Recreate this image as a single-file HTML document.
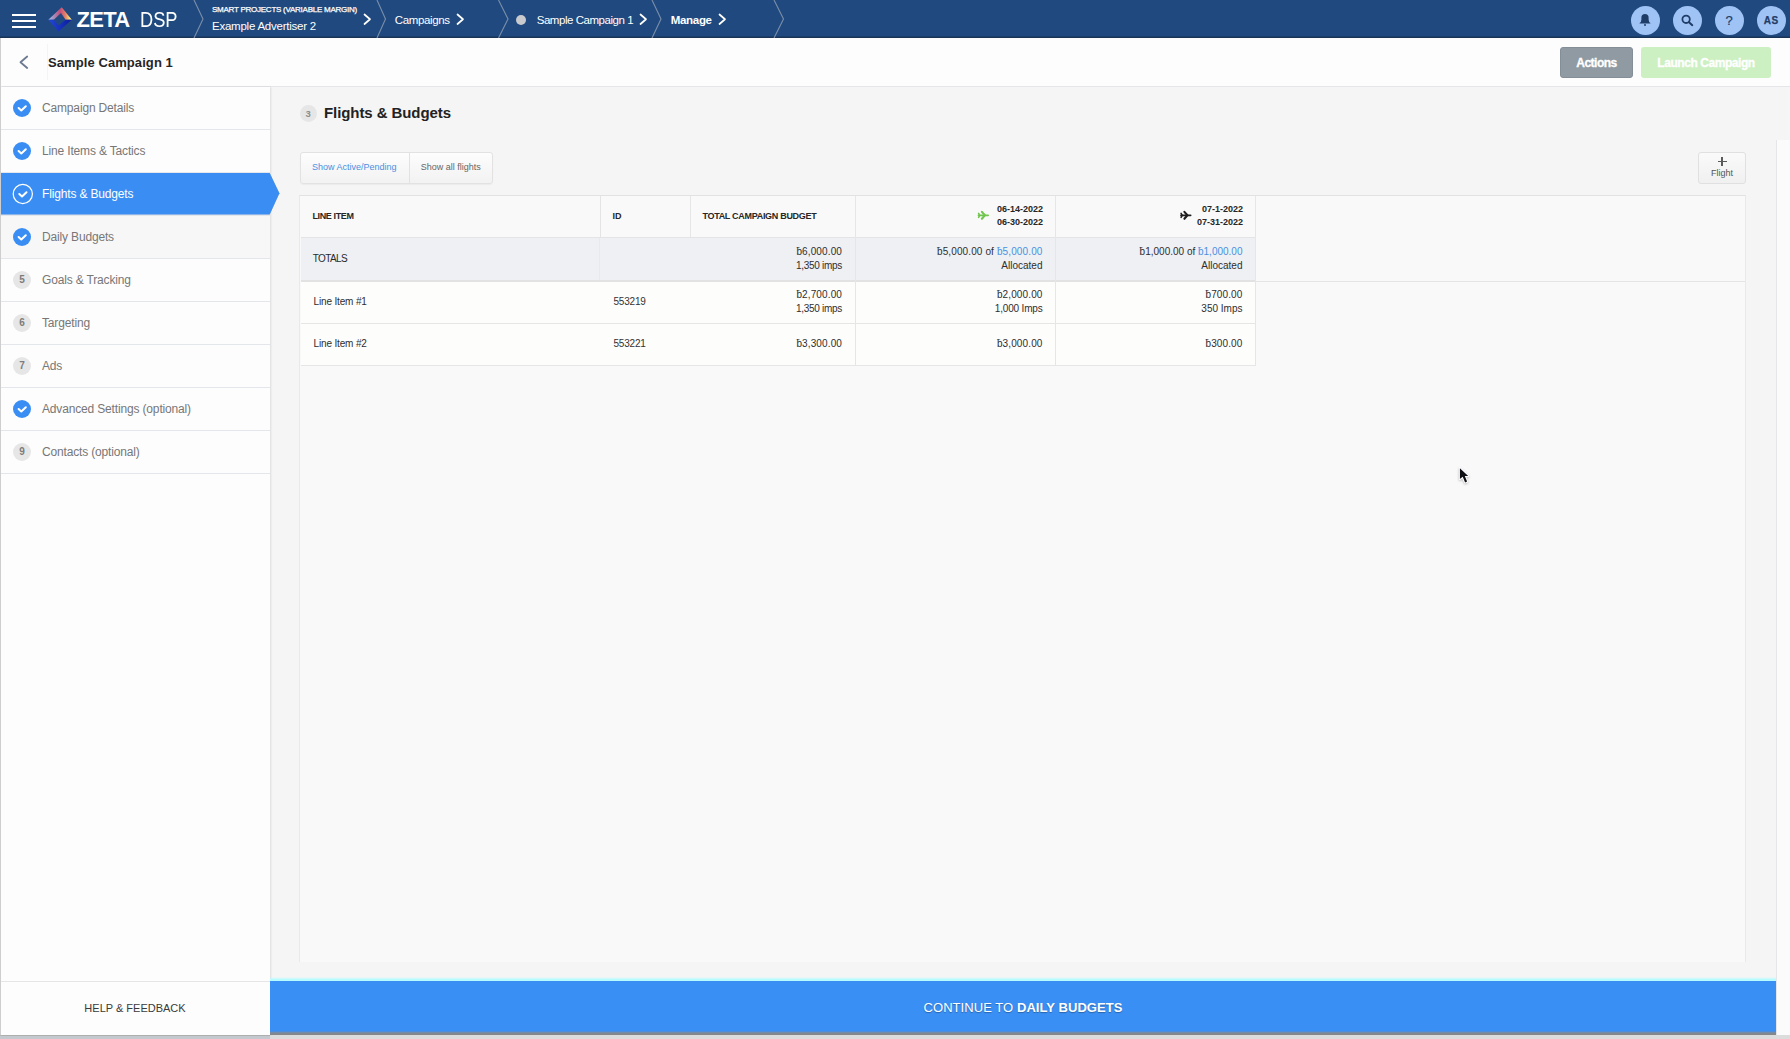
<!DOCTYPE html>
<html><head><meta charset="utf-8"><style>
*{box-sizing:border-box;margin:0;padding:0}
html,body{width:1790px;height:1039px;overflow:hidden;background:#dadada;font-family:"Liberation Sans",sans-serif;color:#333;position:relative}
.t{position:absolute;line-height:0;white-space:nowrap}
.b{position:absolute}
svg{position:absolute;overflow:visible}
</style></head><body>
<div class="b" style="left:0px;top:1035px;width:1790px;height:4px;background:#dcdcdc"></div>
<div class="b" style="left:0px;top:1035px;width:270px;height:1px;background:#b4b4b4"></div>
<div class="b" style="left:0px;top:1036px;width:270px;height:3px;background:#c4c9cf"></div>
<div class="b" style="left:1776px;top:140px;width:14px;height:895px;background:#fbfbfb;border-left:1px solid #e6e6e6"></div>
<div class="b" style="left:270px;top:87px;width:1520px;height:53px;background:#f5f5f5"></div>
<div class="b" style="left:270px;top:140px;width:1506px;height:841px;background:#f5f5f5"></div>
<div class="b" style="left:0px;top:0px;width:1790px;height:38px;background:#204a7f"></div>
<div class="b" style="left:0px;top:36px;width:1790px;height:1px;background:rgba(20,40,70,0.35)"></div>
<div class="b" style="left:0px;top:37px;width:1790px;height:1px;background:#1a3458"></div>
<div class="b" style="left:12px;top:14px;width:24px;height:2px;background:#fff"></div>
<div class="b" style="left:12px;top:20px;width:24px;height:2px;background:#fff"></div>
<div class="b" style="left:12px;top:26px;width:24px;height:2px;background:#fff"></div>
<svg style="left:0;top:0" width="100" height="38">
<defs>
<linearGradient id="gt" x1="48" y1="0" x2="72" y2="0" gradientUnits="userSpaceOnUse">
<stop offset="0" stop-color="#9cc4f2"/><stop offset="0.25" stop-color="#a98ab8"/><stop offset="0.5" stop-color="#c84c7a"/><stop offset="0.72" stop-color="#e0806a"/><stop offset="0.9" stop-color="#f6dc72"/><stop offset="1" stop-color="#fffbd0"/></linearGradient>
<linearGradient id="gb" x1="48" y1="0" x2="72" y2="0" gradientUnits="userSpaceOnUse">
<stop offset="0" stop-color="#2447d8"/><stop offset="1" stop-color="#0a1c9c"/></linearGradient>
</defs>
<path d="M48.3 19.7 L61.7 7.2 L71.8 19.7 L65.6 19.7 L61 13.1 L53.8 19.7 Z" fill="url(#gt)"/>
<path d="M48.3 19.7 L53.8 19.7 L58.7 25.6 L65.6 19.7 L71.8 19.7 L58.4 31.5 Z" fill="url(#gb)"/>
</svg>
<div class="t" style="left:76.5px;top:20.18px;font-size:22px;color:#fff;font-weight:bold;letter-spacing:-0.7px;">ZETA</div>
<div class="t" style="left:140px;top:20.2px;font-size:22px;color:#fff;transform:scaleX(0.83);transform-origin:0 0">DSP</div>
<svg style="left:0;top:0" width="800" height="38"><polyline points="194,0 203,19 194,38" fill="none" stroke="#7a8ea9" stroke-width="1.1"/><polyline points="377,0 385.5,19 377,38" fill="none" stroke="#7a8ea9" stroke-width="1.1"/><polyline points="498.5,0 508,19 498.5,38" fill="none" stroke="#7a8ea9" stroke-width="1.1"/><polyline points="652,0 661,19 652,38" fill="none" stroke="#7a8ea9" stroke-width="1.1"/><polyline points="774,0 783.5,19 774,38" fill="none" stroke="#7a8ea9" stroke-width="1.1"/></svg>
<div class="t" style="left:212px;top:9.83px;font-size:8px;color:#fff;font-weight:normal;letter-spacing:-0.25px;-webkit-text-stroke:0.25px #fff">SMART PROJECTS (VARIABLE MARGIN)</div>
<div class="t" style="left:212px;top:25.82px;font-size:11.5px;color:#fff;font-weight:normal;letter-spacing:-0.24px;">Example Advertiser 2</div>
<svg style="left:0;top:0" width="1" height="1"><polyline points="364.5,14.5 370.0,19.25 364.5,24.0" fill="none" stroke="#fff" stroke-width="1.7" stroke-linecap="round" stroke-linejoin="round"/></svg>
<div class="t" style="left:394.7px;top:19.52px;font-size:11.5px;color:#fff;font-weight:normal;letter-spacing:-0.36px;">Campaigns</div>
<svg style="left:0;top:0" width="1" height="1"><polyline points="457.5,14.5 463.0,19.25 457.5,24.0" fill="none" stroke="#fff" stroke-width="1.7" stroke-linecap="round" stroke-linejoin="round"/></svg>
<div class="b" style="left:516px;top:14.5px;width:10px;height:10px;background:#c9cacd;border-radius:50%"></div>
<div class="t" style="left:536.7px;top:19.52px;font-size:11.5px;color:#fff;font-weight:normal;letter-spacing:-0.46px;">Sample Campaign 1</div>
<svg style="left:0;top:0" width="1" height="1"><polyline points="640.5,14.5 646.0,19.25 640.5,24.0" fill="none" stroke="#fff" stroke-width="1.7" stroke-linecap="round" stroke-linejoin="round"/></svg>
<div class="t" style="left:670.7px;top:19.52px;font-size:11.5px;color:#fff;font-weight:bold;letter-spacing:-0.3px;">Manage</div>
<svg style="left:0;top:0" width="1" height="1"><polyline points="719.5,14.5 725.0,19.25 719.5,24.0" fill="none" stroke="#fff" stroke-width="1.7" stroke-linecap="round" stroke-linejoin="round"/></svg>
<div class="b" style="left:1630.5px;top:5.5px;width:29px;height:29px;background:#a0c3f6;border-radius:50%"></div>
<div class="b" style="left:1672.5px;top:5.5px;width:29px;height:29px;background:#a0c3f6;border-radius:50%"></div>
<div class="b" style="left:1714.5px;top:5.5px;width:29px;height:29px;background:#a0c3f6;border-radius:50%"></div>
<div class="b" style="left:1756.5px;top:5.5px;width:29px;height:29px;background:#a0c3f6;border-radius:50%"></div>
<svg style="left:0;top:0" width="1" height="1">
<path d="M1639.6 23.6 L1650.4 23.6 L1650.4 23 Q1648.6 21.8 1648.6 19.5 L1648.6 17.6 Q1648.6 14 1645 14 Q1641.4 14 1641.4 17.6 L1641.4 19.5 Q1641.4 21.8 1639.6 23 Z" fill="#1f3d66"/>
<rect x="1644" y="24" width="2" height="2" rx="1" fill="#1f3d66"/>
<circle cx="1686.1" cy="19.3" r="3.7" fill="none" stroke="#1f3d66" stroke-width="1.8"/>
<line x1="1689" y1="22.2" x2="1692.3" y2="25.2" stroke="#1f3d66" stroke-width="2" stroke-linecap="round"/>
</svg>
<div class="t" style="left:1429px;width:600px;text-align:center;top:20.70px;font-size:13px;color:#1f3d66;font-weight:normal;letter-spacing:0px;-webkit-text-stroke:0.2px #1f3d66">?</div>
<div class="t" style="left:1471.3px;width:600px;text-align:center;top:20.84px;font-size:10px;color:#1f3d66;font-weight:bold;letter-spacing:0.6px;-webkit-text-stroke:0.25px #1f3d66">AS</div>
<div class="b" style="left:0px;top:38px;width:1790px;height:49px;background:#fdfdfd;border-bottom:1px solid #e4e6ea"></div>
<div class="b" style="left:0px;top:38px;width:1px;height:997px;background:#cfcfcf"></div>
<div class="b" style="left:47px;top:44px;width:1px;height:36px;background:#f4f4f4"></div>
<svg style="left:0;top:0" width="1" height="1"><polyline points="27.2,56.5 20.5,62.3 27.2,68" fill="none" stroke="#6c7b91" stroke-width="1.8" stroke-linecap="round" stroke-linejoin="round"/></svg>
<div class="t" style="left:48px;top:62.80px;font-size:13px;color:#262626;font-weight:bold;letter-spacing:0.08px;">Sample Campaign 1</div>
<div class="b" style="left:1560px;top:47px;width:73px;height:31px;background:#8f9aa3;border:1px solid #848e97;border-radius:3px"></div>
<div class="t" style="left:1296.5px;width:600px;text-align:center;top:62.84px;font-size:12px;color:#fff;font-weight:bold;letter-spacing:-0.5px;-webkit-text-stroke:0.3px #fff">Actions</div>
<div class="b" style="left:1641px;top:47px;width:130px;height:31px;background:#cdf0c2;border-radius:3px"></div>
<div class="t" style="left:1406px;width:600px;text-align:center;top:62.84px;font-size:12px;color:#fff;font-weight:bold;letter-spacing:-0.44px;-webkit-text-stroke:0.3px #fff">Launch Campaign</div>
<div class="b" style="left:1px;top:87px;width:269px;height:948px;background:#fdfdfd;box-shadow:1px 0 2px rgba(0,0,0,0.10)"></div>
<div class="b" style="left:1px;top:129px;width:269px;height:1px;background:#e3e6ea"></div>
<svg style="left:0;top:0" width="1" height="1"><circle cx="22" cy="108" r="9" fill="#3a8ef3"/><polyline points="18.6,108 21.3,110.5 25.8,106.2" fill="none" stroke="#fff" stroke-width="2" stroke-linecap="round" stroke-linejoin="round"/></svg>
<div class="t" style="left:42px;top:107.54px;font-size:12px;color:#777;font-weight:normal;letter-spacing:-0.16px;">Campaign Details</div>
<div class="b" style="left:1px;top:172px;width:269px;height:1px;background:#e3e6ea"></div>
<svg style="left:0;top:0" width="1" height="1"><circle cx="22" cy="151" r="9" fill="#3a8ef3"/><polyline points="18.6,151 21.3,153.5 25.8,149.2" fill="none" stroke="#fff" stroke-width="2" stroke-linecap="round" stroke-linejoin="round"/></svg>
<div class="t" style="left:42px;top:150.54px;font-size:12px;color:#777;font-weight:normal;letter-spacing:-0.16px;">Line Items &amp; Tactics</div>
<div class="b" style="left:1px;top:215px;width:269px;height:1px;background:#e3e6ea"></div>
<svg style="left:0;top:0" width="1" height="1"><path d="M1 173 L269.7 173 L279.4 193.2 L269.7 214.5 L1 214.5 Z" fill="#3a8ef3" style="filter:drop-shadow(0 0.6px 0.4px rgba(0,0,0,0.25))"/><circle cx="22.8" cy="194" r="9.6" fill="none" stroke="#fff" stroke-width="1.2"/><polyline points="19.3,194 22,196.5 26.5,192.2" fill="none" stroke="#fff" stroke-width="2" stroke-linecap="round" stroke-linejoin="round"/></svg>
<div class="t" style="left:42px;top:193.54px;font-size:12px;color:#fff;font-weight:normal;letter-spacing:-0.16px;">Flights &amp; Budgets</div>
<div class="b" style="left:1px;top:216px;width:269px;height:42px;background:#f7f7f7"></div>
<div class="b" style="left:1px;top:258px;width:269px;height:1px;background:#e3e6ea"></div>
<svg style="left:0;top:0" width="1" height="1"><circle cx="22" cy="237" r="9" fill="#3a8ef3"/><polyline points="18.6,237 21.3,239.5 25.8,235.2" fill="none" stroke="#fff" stroke-width="2" stroke-linecap="round" stroke-linejoin="round"/></svg>
<div class="t" style="left:42px;top:236.54px;font-size:12px;color:#777;font-weight:normal;letter-spacing:-0.16px;">Daily Budgets</div>
<div class="b" style="left:1px;top:301px;width:269px;height:1px;background:#e3e6ea"></div>
<div class="b" style="left:13px;top:271px;width:18px;height:18px;background:#e6e6e6;border-radius:50%"></div>
<div class="t" style="left:-278px;width:600px;text-align:center;top:279.74px;font-size:10px;color:#7c7c7c;font-weight:bold;letter-spacing:0px;">5</div>
<div class="t" style="left:42px;top:279.54px;font-size:12px;color:#777;font-weight:normal;letter-spacing:-0.16px;">Goals &amp; Tracking</div>
<div class="b" style="left:1px;top:344px;width:269px;height:1px;background:#e3e6ea"></div>
<div class="b" style="left:13px;top:314px;width:18px;height:18px;background:#e6e6e6;border-radius:50%"></div>
<div class="t" style="left:-278px;width:600px;text-align:center;top:322.74px;font-size:10px;color:#7c7c7c;font-weight:bold;letter-spacing:0px;">6</div>
<div class="t" style="left:42px;top:322.54px;font-size:12px;color:#777;font-weight:normal;letter-spacing:-0.16px;">Targeting</div>
<div class="b" style="left:1px;top:387px;width:269px;height:1px;background:#e3e6ea"></div>
<div class="b" style="left:13px;top:357px;width:18px;height:18px;background:#e6e6e6;border-radius:50%"></div>
<div class="t" style="left:-278px;width:600px;text-align:center;top:365.74px;font-size:10px;color:#7c7c7c;font-weight:bold;letter-spacing:0px;">7</div>
<div class="t" style="left:42px;top:365.54px;font-size:12px;color:#777;font-weight:normal;letter-spacing:-0.16px;">Ads</div>
<div class="b" style="left:1px;top:430px;width:269px;height:1px;background:#e3e6ea"></div>
<svg style="left:0;top:0" width="1" height="1"><circle cx="22" cy="409" r="9" fill="#3a8ef3"/><polyline points="18.6,409 21.3,411.5 25.8,407.2" fill="none" stroke="#fff" stroke-width="2" stroke-linecap="round" stroke-linejoin="round"/></svg>
<div class="t" style="left:42px;top:408.54px;font-size:12px;color:#777;font-weight:normal;letter-spacing:-0.16px;">Advanced Settings (optional)</div>
<div class="b" style="left:1px;top:473px;width:269px;height:1px;background:#e3e6ea"></div>
<div class="b" style="left:13px;top:443px;width:18px;height:18px;background:#e6e6e6;border-radius:50%"></div>
<div class="t" style="left:-278px;width:600px;text-align:center;top:451.74px;font-size:10px;color:#7c7c7c;font-weight:bold;letter-spacing:0px;">9</div>
<div class="t" style="left:42px;top:451.54px;font-size:12px;color:#777;font-weight:normal;letter-spacing:-0.16px;">Contacts (optional)</div>
<div class="b" style="left:1px;top:981px;width:269px;height:1px;background:#e6e6e6"></div>
<div class="t" style="left:-165px;width:600px;text-align:center;top:1008.19px;font-size:11px;color:#3a3a3a;font-weight:normal;letter-spacing:0px;">HELP &amp; FEEDBACK</div>
<div class="b" style="left:299.7px;top:105.2px;width:17px;height:17px;background:#e6e6e7;border-radius:50%"></div>
<div class="t" style="left:8.199999999999989px;width:600px;text-align:center;top:113.51px;font-size:9.5px;color:#8c8c8c;font-weight:bold;letter-spacing:0px;">3</div>
<div class="t" style="left:324px;top:112.60px;font-size:15px;color:#222;font-weight:bold;letter-spacing:-0.08px;">Flights &amp; Budgets</div>
<div class="b" style="left:300px;top:152px;width:193px;height:32px;background:linear-gradient(#fdfdfd,#f2f2f2);border:1px solid #e2e2e2;border-radius:3px;box-shadow:0 1px 1px rgba(0,0,0,0.04)"></div>
<div class="b" style="left:408.5px;top:153px;width:1px;height:30px;background:#e2e2e2"></div>
<div class="t" style="left:54.30000000000001px;width:600px;text-align:center;top:166.88px;font-size:9px;color:#4a90e2;font-weight:normal;letter-spacing:0px;">Show Active/Pending</div>
<div class="t" style="left:150.8px;width:600px;text-align:center;top:166.88px;font-size:9px;color:#666;font-weight:normal;letter-spacing:0px;">Show all flights</div>
<div class="b" style="left:1698px;top:152px;width:48px;height:32px;background:linear-gradient(#fafafa,#f0f0f0);border:1px solid #e0e0e0;border-radius:3px"></div>
<div class="b" style="left:1717.5px;top:161px;width:9px;height:1.2px;background:#5a5a5a"></div>
<div class="b" style="left:1721.4px;top:157px;width:1.2px;height:9px;background:#5a5a5a"></div>
<div class="t" style="left:1422px;width:600px;text-align:center;top:172.58px;font-size:9px;color:#555;font-weight:normal;letter-spacing:0px;">Flight</div>
<div class="b" style="left:299px;top:195px;width:1447px;height:767px;background:#f9f9f9;border:1px solid #e9e9e9;border-top-color:#e2e2e2;border-bottom:none"></div>
<div class="b" style="left:301px;top:238px;width:954px;height:43px;background:#eef0f4"></div>
<div class="b" style="left:301px;top:280px;width:954px;height:2px;background:#e2e2e2"></div>
<div class="b" style="left:1255px;top:281px;width:490px;height:1px;background:#e5e5e5"></div>
<div class="b" style="left:301px;top:282px;width:954px;height:83px;background:#fdfdfc"></div>
<div class="b" style="left:301px;top:323px;width:954px;height:1px;background:#e6e6e6"></div>
<div class="b" style="left:301px;top:365px;width:955px;height:1px;background:#e6e6e6"></div>
<div class="b" style="left:1255px;top:196px;width:1px;height:170px;background:#e6e6e6"></div>
<div class="b" style="left:301px;top:237px;width:954px;height:1px;background:#e4e4e4"></div>
<div class="b" style="left:599.5px;top:196px;width:1.2px;height:41px;background:#e4e4e4"></div>
<div class="b" style="left:690px;top:196px;width:1px;height:41px;background:#e6e6e6"></div>
<div class="b" style="left:599px;top:238px;width:1px;height:42px;background:#e8e9ec"></div>
<div class="b" style="left:855px;top:196px;width:1px;height:169px;background:#e6e6e6"></div>
<div class="b" style="left:1055px;top:196px;width:1px;height:169px;background:#e6e6e6"></div>
<div class="t" style="left:312.5px;top:215.88px;font-size:9px;color:#262626;font-weight:bold;letter-spacing:-0.39px;">LINE ITEM</div>
<div class="t" style="left:612.5px;top:215.88px;font-size:9px;color:#262626;font-weight:bold;letter-spacing:0px;">ID</div>
<div class="t" style="left:702.4px;top:215.88px;font-size:9px;color:#262626;font-weight:bold;letter-spacing:-0.3px;">TOTAL CAMPAIGN BUDGET</div>
<div class="t" style="right:747px;text-align:right;top:209.48px;font-size:9px;color:#262626;font-weight:bold;letter-spacing:0px;">06-14-2022</div>
<div class="t" style="right:747px;text-align:right;top:222.28px;font-size:9px;color:#262626;font-weight:bold;letter-spacing:0px;">06-30-2022</div>
<div class="t" style="right:547px;text-align:right;top:209.48px;font-size:9px;color:#262626;font-weight:bold;letter-spacing:0px;">07-1-2022</div>
<div class="t" style="right:547px;text-align:right;top:222.28px;font-size:9px;color:#262626;font-weight:bold;letter-spacing:0px;">07-31-2022</div>
<svg style="left:0;top:0" width="1" height="1"><g transform="translate(977.5,211)" stroke="#72c64f" fill="none" stroke-linecap="round" stroke-linejoin="round"><line x1="1" y1="4.3" x2="10.6" y2="4.3" stroke-width="1.8"/><path d="M4.4 0.9 L7.4 4.3 L4.4 7.8" stroke-width="2.1"/><path d="M1.1 2.4 L2.2 4.3 L1.1 6.3" stroke-width="1.6"/></g></svg>
<svg style="left:0;top:0" width="1" height="1"><g transform="translate(1180,211)" stroke="#1e1e1e" fill="none" stroke-linecap="round" stroke-linejoin="round"><line x1="1" y1="4.3" x2="10.6" y2="4.3" stroke-width="1.8"/><path d="M4.4 0.9 L7.4 4.3 L4.4 7.8" stroke-width="2.1"/><path d="M1.1 2.4 L2.2 4.3 L1.1 6.3" stroke-width="1.6"/></g></svg>
<div class="t" style="left:312.7px;top:258.84px;font-size:10px;color:#2a2a2a;font-weight:normal;letter-spacing:-0.6px;">TOTALS</div>
<div class="t" style="right:948px;text-align:right;top:251.53px;font-size:10px;color:#2e2e2e;font-weight:normal;letter-spacing:0.12px;">&#x180;6,000.00</div>
<div class="t" style="right:948px;text-align:right;top:265.54px;font-size:10px;color:#2e2e2e;font-weight:normal;letter-spacing:-0.28px;">1,350 imps</div>
<div class="t" style="right:747.5px;text-align:right;top:251.53px;font-size:10px;color:#2e2e2e;font-weight:normal;letter-spacing:0.12px;">&#x180;5,000.00 of <span style="color:#4a90e2">&#x180;5,000.00</span></div>
<div class="t" style="right:747.5px;text-align:right;top:265.54px;font-size:10px;color:#2e2e2e;font-weight:normal;letter-spacing:0px;">Allocated</div>
<div class="t" style="right:547.5px;text-align:right;top:251.53px;font-size:10px;color:#2e2e2e;font-weight:normal;letter-spacing:0px;">&#x180;1,000.00 of <span style="color:#4a90e2">&#x180;1,000.00</span></div>
<div class="t" style="right:547.5px;text-align:right;top:265.54px;font-size:10px;color:#2e2e2e;font-weight:normal;letter-spacing:0px;">Allocated</div>
<div class="t" style="left:313.5px;top:301.54px;font-size:10px;color:#2e2e2e;font-weight:normal;letter-spacing:-0.15px;">Line Item #1</div>
<div class="t" style="left:613.5px;top:301.54px;font-size:10px;color:#333;font-weight:normal;letter-spacing:-0.2px;">553219</div>
<div class="t" style="right:948px;text-align:right;top:294.54px;font-size:10px;color:#2e2e2e;font-weight:normal;letter-spacing:0.12px;">&#x180;2,700.00</div>
<div class="t" style="right:948px;text-align:right;top:308.54px;font-size:10px;color:#2e2e2e;font-weight:normal;letter-spacing:-0.28px;">1,350 imps</div>
<div class="t" style="right:747.5px;text-align:right;top:294.54px;font-size:10px;color:#2e2e2e;font-weight:normal;letter-spacing:0.12px;">&#x180;2,000.00</div>
<div class="t" style="right:747.5px;text-align:right;top:308.54px;font-size:10px;color:#2e2e2e;font-weight:normal;letter-spacing:-0.18px;">1,000 Imps</div>
<div class="t" style="right:547.5px;text-align:right;top:294.54px;font-size:10px;color:#2e2e2e;font-weight:normal;letter-spacing:0.12px;">&#x180;700.00</div>
<div class="t" style="right:547.5px;text-align:right;top:308.54px;font-size:10px;color:#2e2e2e;font-weight:normal;letter-spacing:0px;">350 Imps</div>
<div class="t" style="left:313.5px;top:343.54px;font-size:10px;color:#2e2e2e;font-weight:normal;letter-spacing:-0.15px;">Line Item #2</div>
<div class="t" style="left:613.5px;top:343.54px;font-size:10px;color:#333;font-weight:normal;letter-spacing:-0.2px;">553221</div>
<div class="t" style="right:948px;text-align:right;top:343.54px;font-size:10px;color:#2e2e2e;font-weight:normal;letter-spacing:0.12px;">&#x180;3,300.00</div>
<div class="t" style="right:747.5px;text-align:right;top:343.54px;font-size:10px;color:#2e2e2e;font-weight:normal;letter-spacing:0.12px;">&#x180;3,000.00</div>
<div class="t" style="right:547.5px;text-align:right;top:343.54px;font-size:10px;color:#2e2e2e;font-weight:normal;letter-spacing:0.12px;">&#x180;300.00</div>
<div class="b" style="left:270px;top:977px;width:1506px;height:4px;background:linear-gradient(rgba(180,250,255,0),#b8fbff 60%)"></div>
<div class="b" style="left:270px;top:981px;width:1506px;height:51px;background:#3a8ff4"></div>
<div class="b" style="left:270px;top:1031px;width:1506px;height:4px;background:linear-gradient(#3a8ff4,#7d8a98 45%,#858585)"></div>
<div class="t" style="left:723px;width:600px;text-align:center;top:1007.80px;font-size:13px;color:#fff;font-weight:normal;letter-spacing:0.06px;text-shadow:0 0.5px 1px rgba(0,0,0,0.3)">CONTINUE TO <b>DAILY BUDGETS</b></div>
<svg style="left:0;top:0" width="1" height="1"><path d="M1459.9 468.3 L1459.9 479 L1462.7 476.8 L1465.1 482.4 L1467.1 481.6 L1464.8 476 L1468.2 476 Z" fill="#0d0f14" stroke="#fff" stroke-width="2" stroke-linejoin="round" style="paint-order:stroke;filter:drop-shadow(0.5px 1px 0.8px rgba(0,0,0,0.25))"/></svg>
</body></html>
